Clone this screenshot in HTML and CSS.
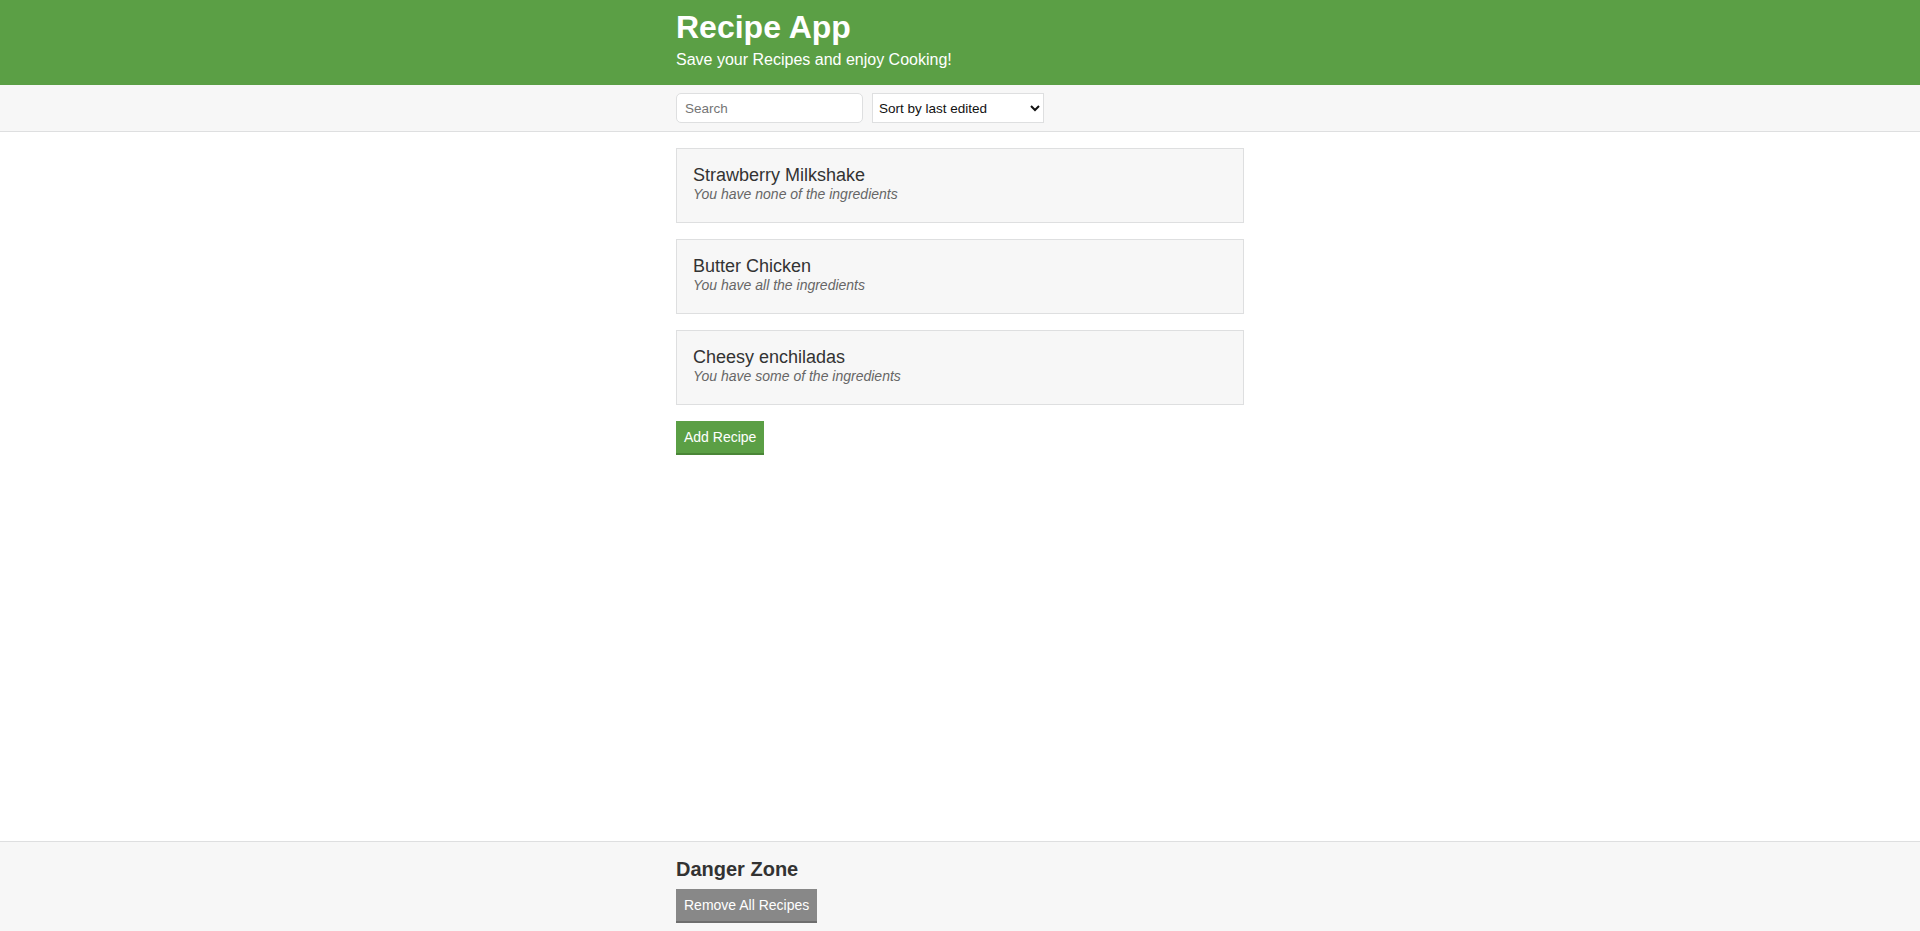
FILE: index.html
```html
<!DOCTYPE html>
<html lang="en">
<head>
<meta charset="utf-8">
<title>Recipe App</title>
<link rel="stylesheet" href="styles.css">
</head>
<body>
<div class="page">
  <header class="header">
    <div class="container">
      <h1 class="header__title">Recipe App</h1>
      <h2 class="header__subtitle">Save your Recipes and enjoy Cooking!</h2>
    </div>
  </header>
  <div class="actions">
    <div class="container actions__container">
      <input class="input" type="text" placeholder="Search">
      <select class="dropdown">
        <option>Sort by last edited</option>
        <option>Sort by recently created</option>
        <option>Sort alphabetically</option>
      </select>
    </div>
  </div>
  <main class="main">
    <div class="container">
      <a class="list-item" href="#">
        <p class="list-item__title">Strawberry Milkshake</p>
        <p class="list-item__subtitle">You have none of the ingredients</p>
      </a>
      <a class="list-item" href="#">
        <p class="list-item__title">Butter Chicken</p>
        <p class="list-item__subtitle">You have all the ingredients</p>
      </a>
      <a class="list-item" href="#">
        <p class="list-item__title">Cheesy enchiladas</p>
        <p class="list-item__subtitle">You have some of the ingredients</p>
      </a>
      <button class="button">Add Recipe</button>
    </div>
  </main>
  <footer class="footer">
    <div class="container">
      <h3 class="footer__title">Danger Zone</h3>
      <button class="button button--secondary">Remove All Recipes</button>
    </div>
  </footer>
</div>
</body>
</html>
```

FILE: styles.css
```css
* {
  box-sizing: border-box;
}

html, body {
  margin: 0;
  padding: 0;
}

body {
  font-family: "Liberation Sans", Arial, sans-serif;
  color: #333333;
  background: #ffffff;
}

.page {
  display: flex;
  flex-direction: column;
  min-height: 100vh;
}

.container {
  max-width: 600px;
  margin: 0 auto;
  padding: 0 16px;
}

.header {
  background: #5b9f45;
  color: #ffffff;
  padding: 9px 0 16px;
}

.header__title {
  font-size: 32px;
  font-weight: bold;
  margin: 0 0 5px;
}

.header__subtitle {
  font-size: 16px;
  font-weight: normal;
  margin: 0;
}

.actions {
  background: #f7f7f7;
  border-bottom: 1px solid #dedfe0;
  padding: 8px 0;
}

.actions__container {
  display: flex;
  align-items: center;
  min-height: 30px;
}

.input {
  width: 187px;
  height: 30px;
  border: 1px solid #dedfe0;
  border-radius: 5px;
  font-family: "Liberation Sans", Arial, sans-serif;
  font-size: 13.5px;
  padding: 4px 8px;
  margin-right: 9px;
  background: #ffffff;
  color: #333333;
}

.input::placeholder {
  color: #757575;
}

.dropdown {
  width: 172px;
  height: 30px;
  border: 1px solid #dedfe0;
  border-radius: 0;
  background: #ffffff;
  font-family: "Liberation Sans", Arial, sans-serif;
  font-size: 13.5px;
  color: #111111;
  padding: 0 2px;
}

.main {
  flex: 1;
}

.list-item {
  display: block;
  text-decoration: none;
  color: #333333;
  background: #f7f7f7;
  border: 1px solid #dedfe0;
  margin: 16px 0;
  padding: 16px 16px 20px;
}

.list-item__title {
  font-size: 18px;
  margin: 0;
}

.list-item__subtitle {
  font-size: 14px;
  color: #666666;
  font-style: italic;
  margin: 0;
}

.button {
  background: #5b9f45;
  border: none;
  border-bottom: 2px solid #4a8637;
  color: #ffffff;
  font-family: "Liberation Sans", Arial, sans-serif;
  font-size: 14px;
  padding: 8px;
  cursor: pointer;
}

.button--secondary {
  background: #888888;
  border-bottom-color: #6e6e6e;
}

.footer {
  background: #f7f7f7;
  border-top: 1px solid #dedfe0;
  padding: 16px 0 8px;
}

.footer__title {
  font-size: 20px;
  font-weight: bold;
  margin: 0 0 8px;
  color: #333333;
}
```
